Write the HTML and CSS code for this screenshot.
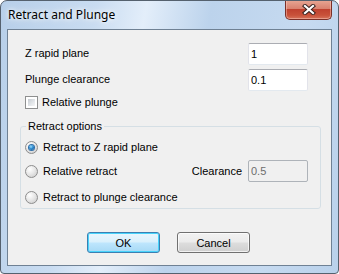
FILE: index.html
```html
<!DOCTYPE html>
<html lang="en">

<head>
    <meta charset="UTF-8">
    <title>Retract and Plunge</title>
    <link rel="stylesheet" href="styles.css">
</head>

<body>

    <div class="window">
        <div class="titlebar">
            <span class="title">Retract and Plunge</span>
            <button class="close-btn">
                <svg width="14" height="11" viewBox="0 0 14 11">
                    <path d="M3 2 L11 9 M11 2 L3 9" stroke="#3a2320" stroke-width="4.2" stroke-linecap="square" />
                    <path d="M3 2 L11 9 M11 2 L3 9" stroke="#ffffff" stroke-width="2.2" stroke-linecap="square" />
                </svg>
            </button>
        </div>

        <div class="client">
            <div class="field-row">
                <label class="label">Z rapid plane</label>
                <input class="textbox" value="1">
            </div>
            <div class="field-row second">
                <label class="label">Plunge clearance</label>
                <input class="textbox" value="0.1">
            </div>
            <div class="check-row">
                <span class="checkbox"></span>
                <span class="label">Relative plunge</span>
            </div>

            <fieldset class="group">
                <legend>Retract options</legend>
                <div class="radio-row first">
                    <span class="radio checked"></span>
                    <span class="label">Retract to Z rapid plane</span>
                </div>
                <div class="radio-row middle">
                    <span class="radio"></span>
                    <span class="label grow">Relative retract</span>
                    <span class="label">Clearance</span>
                    <input class="textbox disabled" value="0.5" disabled>
                </div>
                <div class="radio-row last">
                    <span class="radio"></span>
                    <span class="label">Retract to plunge clearance</span>
                </div>
            </fieldset>

            <div class="buttons">
                <button class="btn default">OK</button>
                <button class="btn">Cancel</button>
            </div>
        </div>
    </div>

</body>

</html>
```

FILE: styles.css
```css
body {
    margin: 0;
    background: #ffffff;
    font-family: "Liberation Sans", Arial, sans-serif;
    font-size: 11px;
    color: #000000;
}

.window {
    width: 339px;
    height: 274px;
    box-sizing: border-box;
    border: 1px solid #55616e;
    border-radius: 7px 7px 4px 4px;
    background: linear-gradient(100deg, #b7cfe9 0%, #c9dcf1 25%, #e3eefa 38%, #bcd3ec 55%, #c6daf0 80%, #b9d1eb 100%);
    display: flex;
    flex-direction: column;
    overflow: hidden;
}

.titlebar {
    height: 28px;
    display: flex;
    justify-content: space-between;
    align-items: flex-start;
    padding: 0 6px 0 7px;
    flex-shrink: 0;
}

.title {
    font-family: "Noto Sans", "Open Sans", sans-serif;
    font-size: 12px;
    line-height: 16px;
    margin-top: 6px;
    color: #000000;
    text-shadow: 0 0 8px #ffffff, 0 0 4px #ffffff;
}

.close-btn {
    width: 47px;
    height: 20px;
    margin-top: -1px;
    padding: 0;
    border: 1px solid #7b3028;
    border-top: none;
    border-radius: 0 0 5px 5px;
    background: linear-gradient(#e8a795 0%, #d9826f 45%, #c0422f 50%, #c9523a 80%, #d6735b 100%);
    box-shadow: inset 0 0 0 1px rgba(255, 210, 200, 0.45);
    display: flex;
    align-items: center;
    justify-content: center;
}

.client {
    flex: 1;
    margin: 0 6px 7px 6px;
    border: 1px solid #6f8194;
    background: #f0f0f0;
    padding: 13px 10px 0 12px;
    display: flex;
    flex-direction: column;
}

.label {
    line-height: 13px;
    white-space: nowrap;
}

.field-row {
    display: flex;
    align-items: center;
    justify-content: space-between;
    height: 22px;
    padding: 0 13px 0 5px;
}

.field-row.second {
    margin-top: 4px;
}

.field-row .label {
    margin-top: -2px;
}

.textbox {
    width: 60px;
    height: 22px;
    box-sizing: border-box;
    border: 1px solid #e2e3ea;
    border-top-color: #abadb3;
    border-bottom-color: #e3e9ef;
    border-radius: 2px;
    background: #ffffff;
    padding: 0 2px;
    font-family: "Liberation Sans", Arial, sans-serif;
    font-size: 11px;
    color: #000000;
    outline: none;
}

.textbox.disabled {
    background: #f0f0f0;
    border: 1px solid #aeb3b9;
    color: #6d6d6d;
    margin-left: 6px;
}

.check-row {
    display: flex;
    align-items: center;
    height: 16px;
    margin-top: 3px;
    padding-left: 5px;
}

.checkbox {
    width: 13px;
    height: 13px;
    box-sizing: border-box;
    border: 1px solid #8e8f8f;
    background: #ffffff;
    margin-right: 4px;
    padding: 2px;
    display: flex;
}

.checkbox::after {
    content: "";
    flex: 1;
    background: linear-gradient(135deg, #c6cbd1 0%, #e4e7ea 60%, #f6f6f6 100%);
}

.group {
    margin: 10px 0 0 0;
    padding: 3px 12px 0 4px;
    border: 1px solid #d5dfe5;
    border-radius: 3px;
    min-width: 0;
}

.group legend {
    padding: 0 2px;
    margin-left: 1px;
    line-height: 13px;
}

.radio-row {
    display: flex;
    align-items: center;
    height: 22px;
}

.radio-row.middle {
    margin-top: 2px;
}

.radio-row.last {
    margin-top: 4px;
}

.radio {
    width: 13px;
    height: 13px;
    box-sizing: border-box;
    border-radius: 50%;
    border: 1px solid #8d8d8d;
    background: radial-gradient(circle at 35% 30%, #ffffff 0%, #e8e8e8 45%, #c7c7c7 100%);
    margin-right: 5px;
    display: flex;
    align-items: center;
    justify-content: center;
}

.radio.checked::after {
    content: "";
    width: 5px;
    height: 5px;
    border-radius: 50%;
    background: radial-gradient(circle at 40% 35%, #9ee0fb 0%, #2b8ad1 45%, #0c4f8c 100%);
    box-shadow: 0 0 0 1px #2f6ea8;
}

.grow {
    flex: 1;
}

.buttons {
    display: flex;
    justify-content: center;
    gap: 17px;
    margin-top: 23px;
    padding-right: 4px;
}

.btn {
    width: 73px;
    height: 21px;
    box-sizing: border-box;
    border: 1px solid #707070;
    border-radius: 3px;
    background: linear-gradient(#f2f2f2 0%, #ebebeb 48%, #dddddd 52%, #cfcfcf 100%);
    box-shadow: inset 0 0 0 1px rgba(255, 255, 255, 0.7);
    font-family: "Liberation Sans", Arial, sans-serif;
    font-size: 11px;
    color: #000000;
    padding: 0;
}

.btn.default {
    border-color: #3c7fb1;
    background: linear-gradient(#eaf6fd 0%, #d9f0fc 48%, #bee6fd 52%, #a7d9f5 100%);
    box-shadow: inset 0 0 0 1px #48d3fb;
}
```
